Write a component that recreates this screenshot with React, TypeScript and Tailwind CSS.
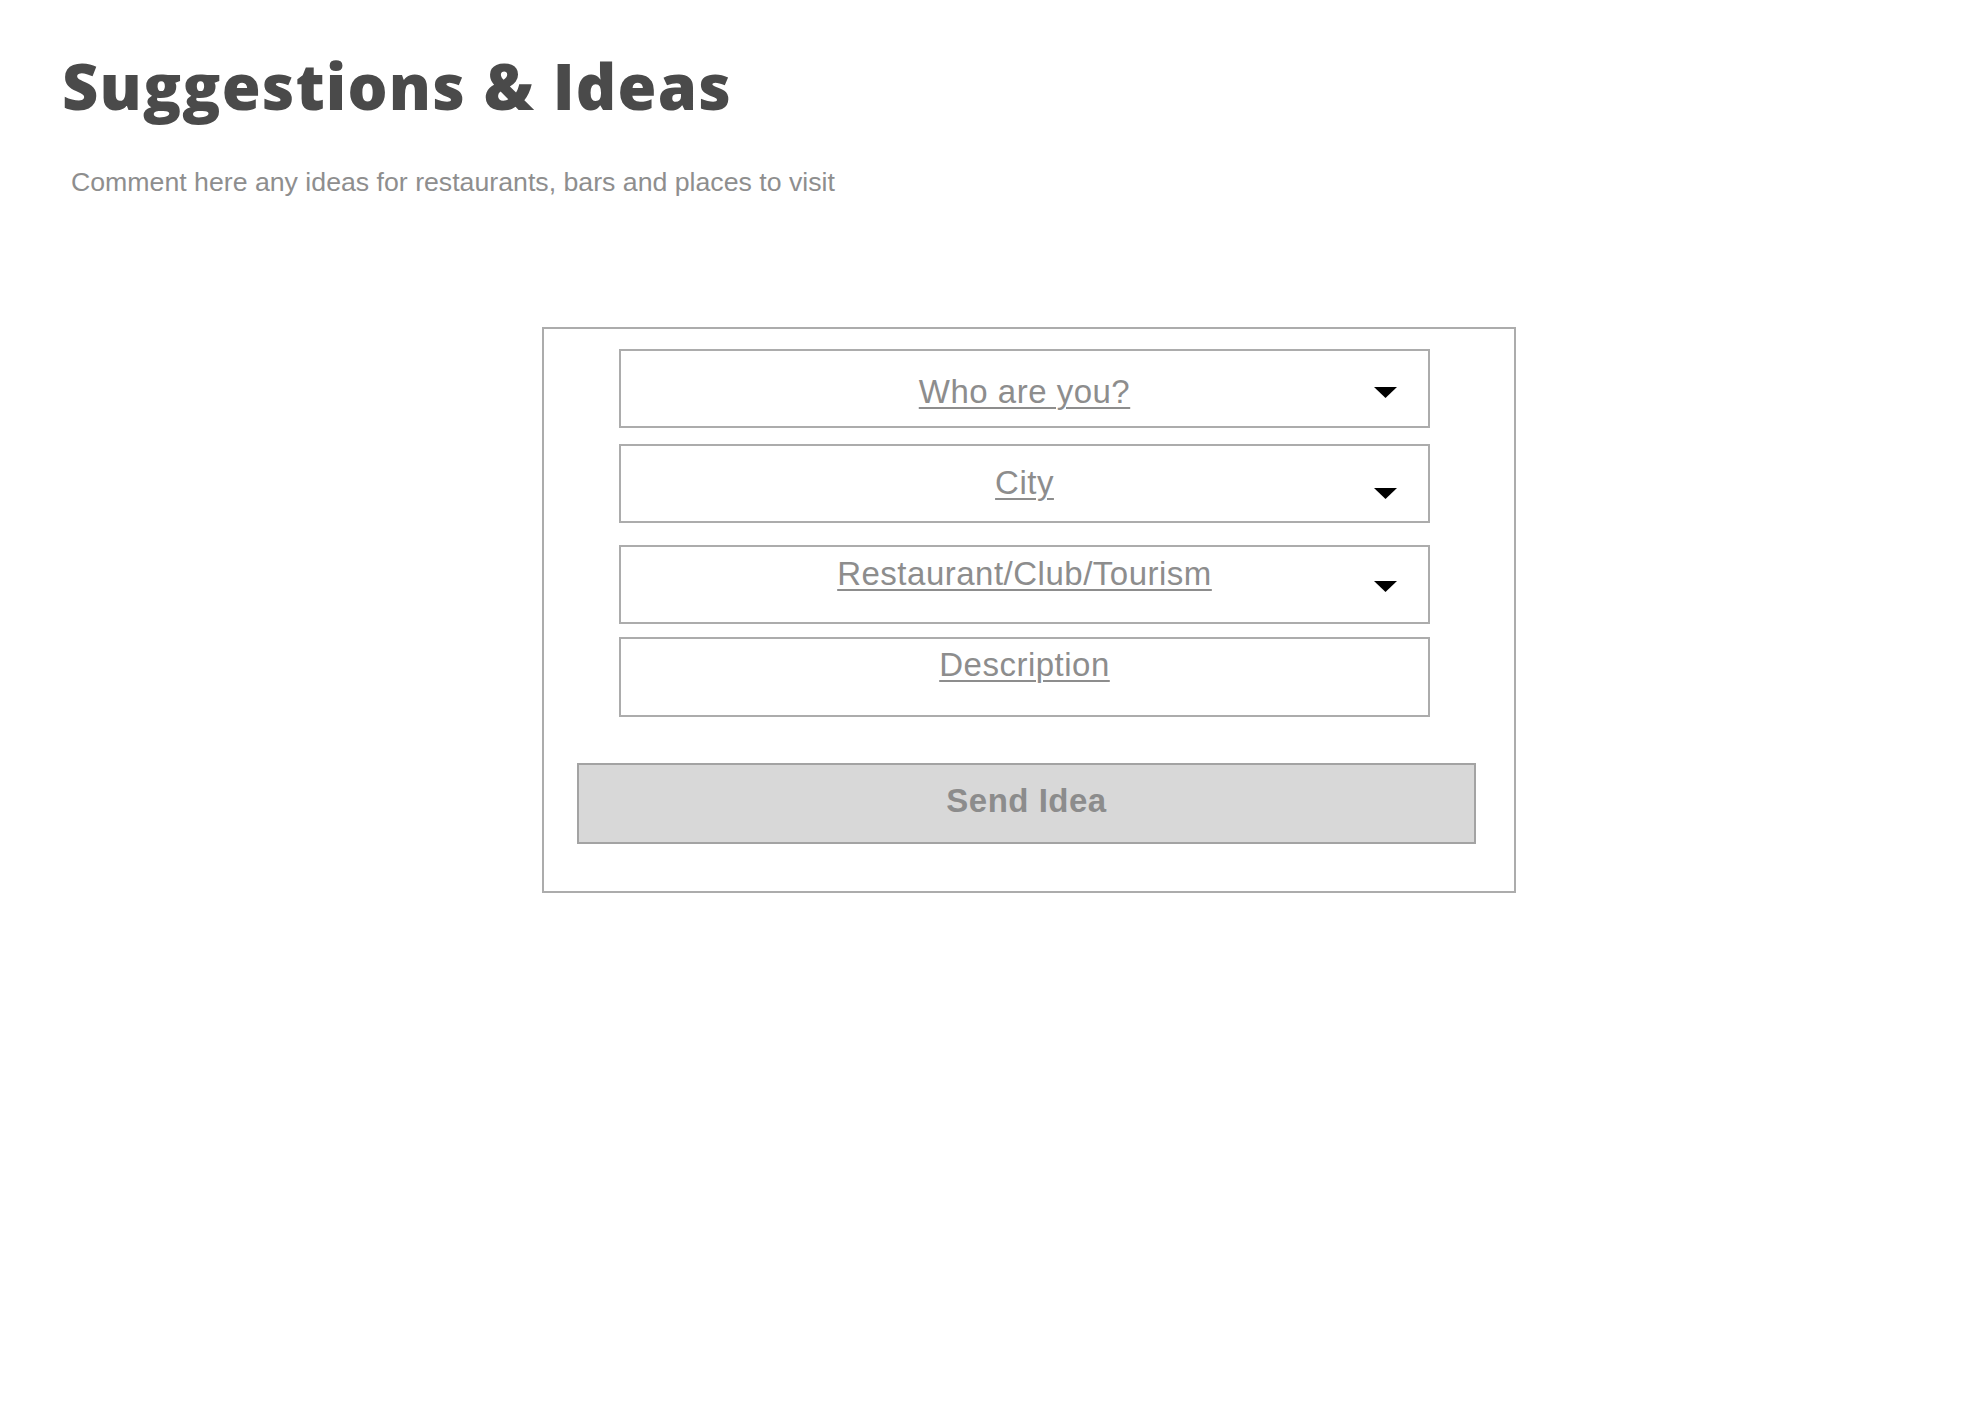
import React from "react";

function Caret() {
  return (
    <svg width="23" height="11" viewBox="0 0 23 11" className="block">
      <polygon points="0,0 23,0 11.5,11" fill="#000" />
    </svg>
  );
}

type FieldProps = {
  label: string;
  h: string;
  pt: string;
  mt: string;
  caretTop?: string;
};

function Field({ label, h, pt, mt, caretTop }: FieldProps) {
  return (
    <div
      className={`relative w-[811px] border-2 border-[#acacac] bg-white ${h} ${pt} ${mt}`}
    >
      <div className="text-center leading-none">
        <span className="text-[33px] tracking-[0.5px] text-[#8d8d8d] underline decoration-[1.5px] underline-offset-[4px]">
          {label}
        </span>
      </div>
      {caretTop ? (
        <div className={`absolute right-[31px] ${caretTop}`}>
          <Caret />
        </div>
      ) : null}
    </div>
  );
}

export default function App() {
  return (
    <div
      className="min-h-screen w-full bg-white"
      style={{ fontFamily: '"Liberation Sans", Arial, sans-serif' }}
    >
      <div className="pl-[62px] pt-[54px]">
        <h1
          className="text-[63px] font-extrabold leading-none tracking-[1.2px] text-[#4a4a4a]"
          style={{ fontFamily: '"Open Sans", sans-serif' }}
        >
          Suggestions &amp; Ideas
        </h1>
        <p className="ml-[9px] mt-[52px] text-[26.7px] leading-none text-[#8e8e8e]">
          Comment here any ideas for restaurants, bars and places to visit
        </p>
      </div>

      <div className="ml-[542px] mt-[131px] h-[566px] w-[974px] border-2 border-[#acacac] bg-white">
        <div className="flex flex-col pl-[75px]">
          <Field
            label="Who are you?"
            h="h-[79px]"
            pt="pt-[24px]"
            mt="mt-[20px]"
            caretTop="top-[36px]"
          />
          <Field
            label="City"
            h="h-[79px]"
            pt="pt-[20px]"
            mt="mt-[16px]"
            caretTop="top-[42px]"
          />
          <Field
            label="Restaurant/Club/Tourism"
            h="h-[79px]"
            pt="pt-[10px]"
            mt="mt-[22px]"
            caretTop="top-[34px]"
          />
          <Field
            label="Description"
            h="h-[80px]"
            pt="pt-[9px]"
            mt="mt-[13px]"
          />
        </div>
        <div className="pl-[33px] pt-[46px]">
          <button
            type="button"
            className="flex h-[81px] w-[899px] items-center justify-center border-2 border-[#a3a3a3] bg-[#d8d8d8] pb-[5px] text-[33px] font-bold leading-none tracking-[0.5px] text-[#8c8c8c]"
          >
            Send Idea
          </button>
        </div>
      </div>
    </div>
  );
}
